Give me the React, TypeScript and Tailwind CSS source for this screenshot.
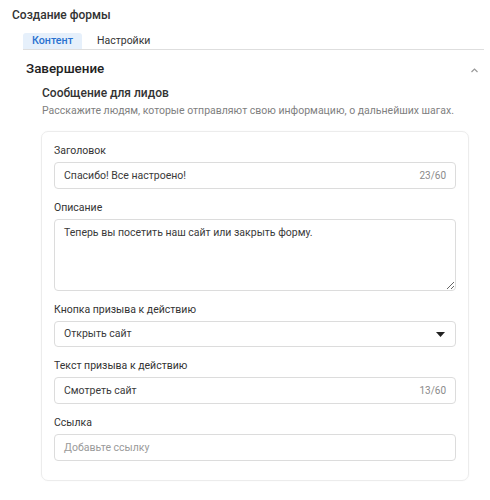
import React from "react";

function Label({ children }: { children: React.ReactNode }) {
  return <div className="h-[16px] text-[10.5px] leading-[16px] text-[#333]">{children}</div>;
}

function Input({ value, counter, placeholder }: { value?: string; counter?: string; placeholder?: string }) {
  return (
    <div className="mt-[3px] flex h-[27px] items-center justify-between rounded-[4px] border border-[#dcdcdc] bg-white pl-[9px] pr-[9px] text-[10.5px]">
      {value ? <span className="text-[#3a3a3a]">{value}</span> : <span className="text-[#9a9a9a]">{placeholder}</span>}
      {counter && <span className="text-[10px] text-[#8a8a8a]">{counter}</span>}
    </div>
  );
}

export default function App() {
  return (
    <div className="h-[500px] w-[490px] bg-white font-['Roboto',sans-serif] text-[#333]">
      <div className="pl-[12px] pt-[6px] text-[12px] font-medium leading-[18px] text-[#333]">Создание формы</div>
      <div className="ml-[23px] mr-[6px] mt-[9px] flex items-center gap-[15px] border-b border-[#dedede]">
        <div className="flex h-[16px] items-center rounded-t-[3px] bg-[#e6f0fb] px-[9px] text-[10.7px] font-medium text-[#2a72d0]">
          Контент
        </div>
        <div className="text-[10.5px] leading-[16px] text-[#333]">Настройки</div>
      </div>
      <div className="ml-[26px] mr-[11px] mt-[9px] flex items-center justify-between">
        <div className="text-[13.4px] font-medium leading-[20px] text-[#222]">Завершение</div>
        <svg width="9" height="7" viewBox="0 0 9 7" className="mt-[2px]">
          <path d="M1.5 5 L4.5 2 L7.5 5" fill="none" stroke="#999" strokeWidth="1.2" />
        </svg>
      </div>
      <div className="ml-[42px] mt-[5px] text-[12px] font-medium leading-[18px] text-[#333]">Сообщение для лидов</div>
      <div className="ml-[42px] mt-[1px] text-[10.5px] leading-[16px] text-[#808080]">
        Расскажите людям, которые отправляют свою информацию, о дальнейших шагах.
      </div>
      <div className="ml-[41px] mr-[21px] mt-[12px] rounded-[7px] border border-[#ececec] px-[12px] pb-[19px] pt-[11px] shadow-[0_0_2px_rgba(0,0,0,0.04)]">
        <div className="flex flex-col gap-[11px]">
          <div>
            <Label>Заголовок</Label>
            <Input value="Спасибо! Все настроено!" counter="23/60" />
          </div>
          <div>
            <Label>Описание</Label>
            <textarea
              readOnly
              defaultValue="Теперь вы посетить наш сайт или закрыть форму."
              className="mt-[3px] block h-[72px] w-full rounded-[4px] border border-[#dcdcdc] px-[9px] pt-[6px] text-[10.5px] leading-[14px] text-[#3a3a3a] outline-none"
            />
          </div>
          <div>
            <Label>Кнопка призыва к действию</Label>
            <div className="mt-[3px] flex h-[26px] items-center justify-between rounded-[4px] border border-[#dcdcdc] pl-[9px] pr-[10px] text-[10.5px]">
              <span className="text-[#3a3a3a]">Открыть сайт</span>
              <svg width="9" height="5" viewBox="0 0 9 5">
                <path d="M0 0 H9 L4.5 5 Z" fill="#222" />
              </svg>
            </div>
          </div>
          <div>
            <Label>Текст призыва к действию</Label>
            <Input value="Смотреть сайт" counter="13/60" />
          </div>
          <div>
            <Label>Ссылка</Label>
            <Input placeholder="Добавьте ссылку" />
          </div>
        </div>
      </div>
    </div>
  );
}
